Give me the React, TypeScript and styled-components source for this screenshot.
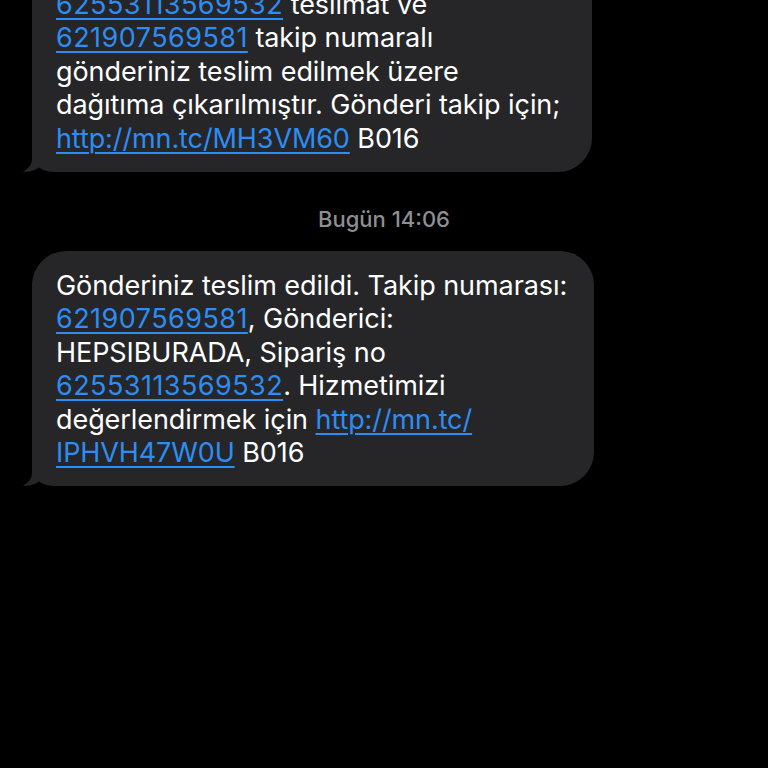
import React from 'react';
import styled, { createGlobalStyle } from 'styled-components';

const GlobalStyle = createGlobalStyle`
  html, body {
    margin: 0;
    padding: 0;
    background: #000;
  }
  body {
    font-family: Inter, "Noto Sans", "Liberation Sans", sans-serif;
    -webkit-font-smoothing: antialiased;
  }
`;

const Screen = styled.div`
  width: 768px;
  height: 768px;
  overflow: hidden;
  background: #000;
`;

const Thread = styled.div`
  display: flex;
  flex-direction: column;
  align-items: flex-start;
  margin-top: -80px;
  padding: 0 32px;
`;

const Bubble = styled.div<{ $width: number; $padTop: number }>`
  position: relative;
  box-sizing: border-box;
  width: ${({ $width }) => $width}px;
  padding: ${({ $padTop }) => $padTop}px 20px 17px 24px;
  background: #262628;
  border-radius: 34px;
  color: #fff;
  font-size: 27px;
  line-height: 33.4px;
  letter-spacing: -0.07px;
`;

const Tail = styled.svg`
  position: absolute;
  left: -10px;
  bottom: 0;
  width: 44px;
  height: 34px;
`;

const Line = styled.div`
  position: relative;
  white-space: nowrap;
`;

const Link = styled.span<{ $num?: boolean }>`
  color: #2d8df2;
  text-decoration: underline;
  text-decoration-thickness: 2px;
  text-underline-offset: 4px;
  letter-spacing: ${({ $num }) => ($num ? '0.45px' : '-0.1px')};
`;

const Stamp = styled.div`
  align-self: center;
  margin: 34px 0 19px;
  color: #8e8e93;
  font-size: 22px;
  line-height: 26px;
  font-weight: 500;
`;

const BubbleTail = () => (
  <Tail viewBox="0 0 44 34">
    <path
      d="M10 0 L10 20 C10 27 6 31 1 33.6 C7 34.4 13 32.6 17 29.5 C21 32.5 27 34 34 34 L44 34 L44 0 Z"
      fill="#262628"
    />
  </Tail>
);

export default function App() {
  return (
    <Screen>
      <GlobalStyle />
      <Thread>
        <Bubble $width={560} $padTop={68}>
          <BubbleTail />
          <Line>
            <Link $num>62553113569532</Link> teslimat ve
          </Line>
          <Line>
            <Link $num>621907569581</Link> takip numaralı
          </Line>
          <Line>gönderiniz teslim edilmek üzere</Line>
          <Line>dağıtıma çıkarılmıştır. Gönderi takip için;</Line>
          <Line>
            <Link>http://mn.tc/MH3VM60</Link> B016
          </Line>
        </Bubble>

        <Stamp>Bugün 14:06</Stamp>

        <Bubble $width={562} $padTop={18}>
          <BubbleTail />
          <Line>Gönderiniz teslim edildi. Takip numarası:</Line>
          <Line>
            <Link $num>621907569581</Link>, Gönderici:
          </Line>
          <Line>HEPSIBURADA, Sipariş no</Line>
          <Line>
            <Link $num>62553113569532</Link>. Hizmetimizi
          </Line>
          <Line>
            değerlendirmek için <Link>http://mn.tc/</Link>
          </Line>
          <Line>
            <Link>IPHVH47W0U</Link> B016
          </Line>
        </Bubble>
      </Thread>
    </Screen>
  );
}
